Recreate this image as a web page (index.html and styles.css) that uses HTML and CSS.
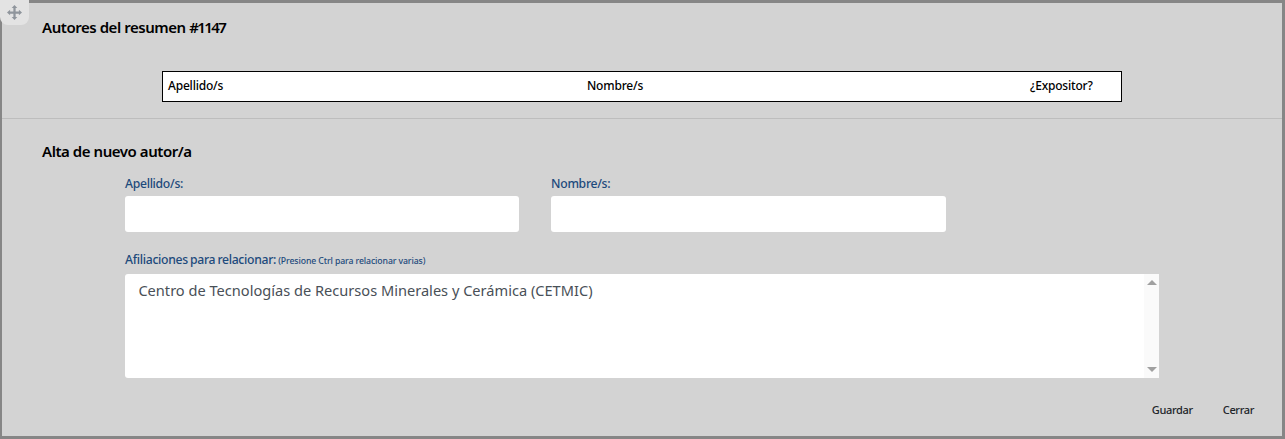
FILE: index.html
```html
<!DOCTYPE html>
<html lang="es">
<head>
<meta charset="utf-8">
<title>Autores del resumen</title>
<link rel="stylesheet" href="styles.css">
</head>
<body>
<div class="modal">
  <div class="drag">
    <svg width="15" height="15" viewBox="0 0 16 16" class="drag-icon"><path d="M8 0 11 3.3H9.2V6.8H12.7V5L16 8 12.7 11V9.2H9.2V12.7H11L8 16 5 12.7H6.8V9.2H3.3V11L0 8 3.3 5V6.8H6.8V3.3H5Z"/></svg>
  </div>
  <header class="head">
    <h2 class="title">Autores del resumen <span class="num">#1147</span></h2>
    <div class="table">
      <span class="col-a">Apellido/s</span>
      <span class="col-b">Nombre/s</span>
      <span class="col-c">¿Expositor?</span>
    </div>
  </header>
  <section class="body">
    <h2 class="title">Alta de nuevo autor/a</h2>
    <div class="fields">
      <div class="field">
        <label class="label">Apellido/s:</label>
        <div class="input"></div>
      </div>
      <div class="field">
        <label class="label">Nombre/s:</label>
        <div class="input"></div>
      </div>
    </div>
    <div class="aff">
      <label class="label">Afiliaciones para relacionar: <small class="hint">(Presione Ctrl para relacionar varias)</small></label>
      <div class="listbox">
        <div class="option">Centro de Tecnologías de Recursos Minerales y Cerámica (CETMIC)</div>
        <div class="scroll">
          <span class="arrow-up"></span>
          <span class="arrow-down"></span>
        </div>
      </div>
    </div>
    <div class="actions">
      <span class="btn">Guardar</span>
      <span class="btn">Cerrar</span>
    </div>
  </section>
</div>
</body>
</html>
```
FILE: styles.css
```css
* { box-sizing: border-box; }
html, body { margin: 0; padding: 0; }
body { font-family: "Noto Sans", "Open Sans", sans-serif; overflow: hidden; }
.modal {
  position: relative;
  width: 1285px;
  height: 439px;
  background: #d3d3d3;
  border-style: solid;
  border-color: #868686;
  border-width: 3px 3px 3px 2px;
}
.drag {
  position: absolute;
  left: -2px;
  top: -3px;
  width: 29px;
  height: 25px;
  background: #e3e3e3;
  border-radius: 0 0 8px 8px;
  display: flex;
  align-items: center;
  justify-content: center;
}
.drag-icon { fill: #8f959c; display: block; }
.head { height: 116px; border-bottom: 1px solid #bdbdbd; padding: 13px 0 0 40px; }
.title { margin: 0; font-size: 15px; line-height: 22px; font-weight: 600; color: #000; letter-spacing: -0.45px; }
.num { letter-spacing: -1.6px; }
.table {
  margin: 33px 0 0 120px;
  width: 960px;
  height: 31px;
  padding: 0 0 2px 5px;
  background: #fff;
  border: 1px solid #000;
  display: flex;
  align-items: center;
  font-size: 12px;
  font-weight: 500;
  letter-spacing: -0.2px;
  color: #000;
}
.col-a { width: 419px; }
.col-b { width: 443px; }
.body { padding: 21px 0 0 40px; }
.fields { display: flex; gap: 31.65px; margin: 13px 0 0 83px; }
.field { width: 394.45px; }
.label { display: block; font-size: 12.2px; line-height: 18px; font-weight: 500; letter-spacing: -0.3px; word-spacing: -0.7px; color: #1d4a7c; }
.input { height: 36px; margin-top: 3px; background: #fff; border-radius: 3px; }
.aff { margin: 19px 0 0 83px; width: 1034px; }
.hint { font-size: 8.7px; letter-spacing: -0.1px; word-spacing: 0; }
.listbox {
  height: 104px;
  margin-top: 4px;
  background: #fff;
  border-radius: 3px;
  display: flex;
  justify-content: space-between;
}
.option { padding: 6px 0 0 13.4px; font-size: 14.6px; line-height: 21px; color: #495057; }
.scroll {
  width: 15px;
  background: #fafafa;
  display: flex;
  flex-direction: column;
  justify-content: space-between;
  align-items: center;
  padding: 6px 0 6px;
}
.arrow-up { border: 5px solid transparent; border-top: 0; border-bottom: 5px solid #a0a0a0; }
.arrow-down { border: 5px solid transparent; border-bottom: 0; border-top: 5px solid #a0a0a0; }
.actions { display: flex; justify-content: flex-end; gap: 30px; margin-top: 24px; padding-right: 28px; }
.btn { font-size: 11px; line-height: 16px; font-weight: 500; letter-spacing: -0.35px; color: #212529; }
```
